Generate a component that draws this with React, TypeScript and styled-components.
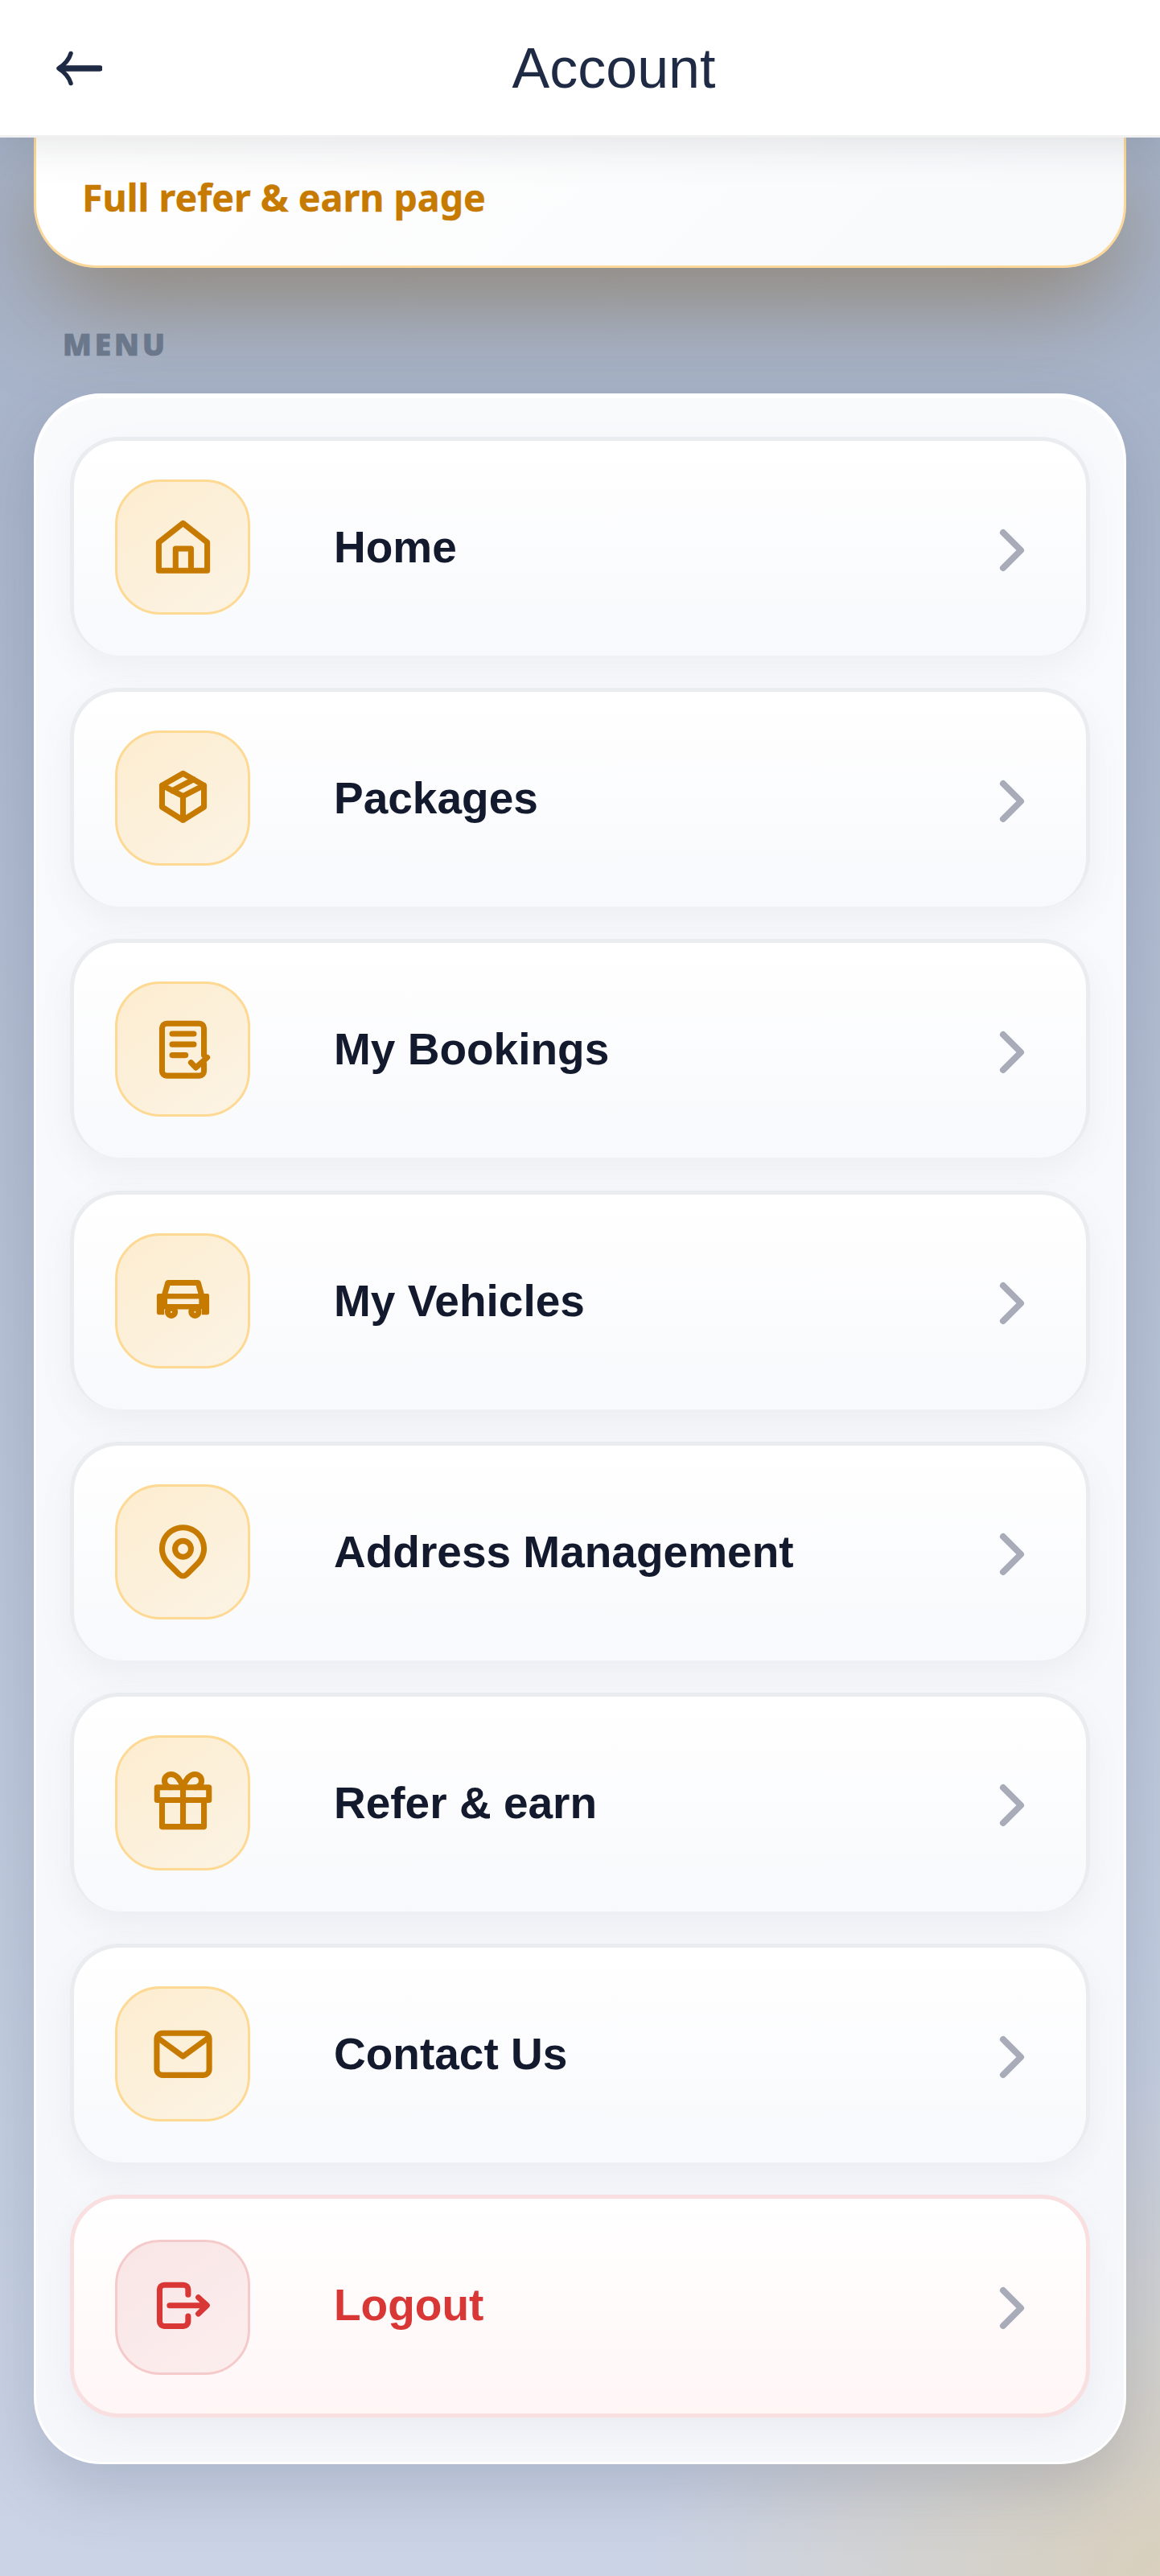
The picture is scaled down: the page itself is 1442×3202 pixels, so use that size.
import type { ReactNode } from "react";
import styled, { createGlobalStyle } from "styled-components";

const AMBER = "#c77a00";
const RED = "#d93636";

const GlobalStyle = createGlobalStyle`
  html, body {
    margin: 0;
    padding: 0;
    background: #b5c0d3;
  }
  * {
    box-sizing: border-box;
  }
`;

function Glyph({ children }: { children: ReactNode }) {
  return (
    <GlyphSvg viewBox="0 0 24 24" fill="none">
      {children}
    </GlyphSvg>
  );
}

const menuItems: { label: string; danger?: boolean; icon: ReactNode }[] = [
  {
    label: "Home",
    icon: (
      <Glyph>
        <path d="M3.5 10.2 12 3.5l8.5 6.7v9.9h-17zM9.4 20.1v-7.7h5.4v7.7" />
      </Glyph>
    ),
  },
  {
    label: "Packages",
    icon: (
      <Glyph>
        <path d="M12 3.2l7.35 4.2V15L12 19.6 4.65 15V7.4zM4.65 7.4 12 11.2l7.35-3.8M12 11.2v8.4M8.2 9.3l7.5-4" />
      </Glyph>
    ),
  },
  {
    label: "My Bookings",
    icon: (
      <Glyph>
        <path d="M19.35 14V4.5a1.6 1.6 0 0 0-1.6-1.6H6.25a1.6 1.6 0 0 0-1.6 1.6v15.1a1.6 1.6 0 0 0 1.6 1.6h11.5a1.6 1.6 0 0 0 1.6-1.6V17" />
        <path d="M8.2 6.5h7.6M8.2 10.2h7.6M8.2 14h4.7M14.8 16.6l1.7 1.8 4-3.6" />
      </Glyph>
    ),
  },
  {
    label: "My Vehicles",
    icon: (
      <Glyph>
        <path
          fill={AMBER}
          stroke="none"
          fillRule="evenodd"
          d="M3.4 9.6h17.2q.6 0 .6.6v6.2q0 .6-.6.6h-2V15.1H5.4V17h-2q-.6 0-.6-.6v-6.2q0-.6.6-.6zM6.5 11.4v1.9h11.1v-1.9z"
        />
        <path d="M5.6 9.7 6.7 5.8h10.6l1.1 3.9" />
        <circle cx="7.9" cy="16.05" r="1.3" />
        <circle cx="16.2" cy="16.05" r="1.3" />
      </Glyph>
    ),
  },
  {
    label: "Address Management",
    icon: (
      <Glyph>
        <path d="M12 3.6a7.35 7.35 0 0 1 5.2 12.55L13.4 20a2 2 0 0 1-2.8 0l-3.8-3.85A7.35 7.35 0 0 1 12 3.6z" />
        <circle cx="12" cy="11.1" r="2.8" />
      </Glyph>
    ),
  },
  {
    label: "Refer & earn",
    icon: (
      <Glyph>
        <path d="M2.9 6.7h18.2v4.45H2.9zM4.65 11.15v9.35h14.7v-9.35M12 6.7v13.8" />
        <path d="M12 6.7C11.2 4.3 9.8 2.1 7.8 2.1a2.3 2.3 0 0 0 0 4.6M12 6.7c.8-2.4 2.2-4.6 4.2-4.6a2.3 2.3 0 0 1 0 4.6" />
      </Glyph>
    ),
  },
  {
    label: "Contact Us",
    icon: (
      <Glyph>
        <rect x="2.8" y="4.6" width="18.4" height="14.7" rx="2" />
        <path d="M3.5 6.5 12 12.75l8.5-6.25" />
      </Glyph>
    ),
  },
  {
    label: "Logout",
    danger: true,
    icon: (
      <Glyph>
        <path d="M13.8 7.4V5.6A1.6 1.6 0 0 0 12.2 4H5.4a1.6 1.6 0 0 0-1.6 1.6v11.3a1.6 1.6 0 0 0 1.6 1.6h6.8a1.6 1.6 0 0 0 1.6-1.6V15" />
        <path d="M7.3 11.2h13M17.4 8.4l3 2.8-3 2.9" />
      </Glyph>
    ),
  },
];

export default function App() {
  return (
    <Page>
      <GlobalStyle />
      <Header>
        <BackButton aria-label="Back">
          <svg width="58" height="44" viewBox="0 0 58 44" fill="none">
            <path d="M55 22H6" stroke="#1f2a44" strokeWidth="7.5" strokeLinecap="round" />
            <path
              d="M19 3.5Q16 14 4 22q12 8 15 18.5"
              stroke="#1f2a44"
              strokeWidth="5.5"
              strokeLinecap="round"
              strokeLinejoin="round"
            />
          </svg>
        </BackButton>
        <Title>Account</Title>
      </Header>

      <Content>
        <ReferCard>
          <ReferLink>Full refer &amp; earn page</ReferLink>
        </ReferCard>

        <SectionLabel>MENU</SectionLabel>

        <MenuCard>
          {menuItems.map((item) => (
            <MenuRow key={item.label} $danger={item.danger}>
              <IconBox $danger={item.danger}>{item.icon}</IconBox>
              <RowLabel $danger={item.danger}>{item.label}</RowLabel>
              <Chevron viewBox="0 0 24 24" fill="none">
                <path d="M9 18l6-6-6-6" />
              </Chevron>
            </MenuRow>
          ))}
        </MenuCard>
      </Content>
    </Page>
  );
}

const Page = styled.div`
  width: 1442px;
  height: 3202px;
  overflow: hidden;
  display: flex;
  flex-direction: column;
  background:
    radial-gradient(circle 640px at 100% 100%, #d9d0bd 0%, rgba(217, 208, 189, 0) 100%),
    linear-gradient(180deg, #a2afc5 0%, #b4bfd3 45%, #cbd4e6 100%);
`;

const Header = styled.header`
  position: relative;
  z-index: 2;
  flex: none;
  height: 171px;
  padding: 1px 43px 0 69px;
  display: flex;
  align-items: center;
  background: #fff;
  border-bottom: 3px solid #f0f0f1;
  box-shadow: 0 6px 50px rgba(30, 35, 50, 0.13);
`;

const BackButton = styled.button`
  flex: none;
  width: 58px;
  height: 44px;
  padding: 0;
  border: 0;
  background: none;
  display: flex;
`;

const Title = styled.h1`
  flex: 1;
  margin: 0;
  text-align: center;
  font-family: "Liberation Sans", Arial, sans-serif;
  font-size: 70px;
  font-weight: 400;
  color: #1f2a44;
`;

const Content = styled.main`
  padding: 0 42px;
  display: flex;
  flex-direction: column;
`;

const ReferCard = styled.section`
  height: 162px;
  padding: 0 0 0 57px;
  display: flex;
  align-items: flex-end;
  border: 3px solid #fbd89a;
  border-top: 0;
  border-radius: 0 0 78px 78px;
  background: linear-gradient(135deg, #ffffff 0%, #f8f9fb 100%);
  box-shadow: 0 50px 120px -10px rgba(125, 95, 50, 0.55);
`;

const ReferLink = styled.span`
  margin-bottom: 55px;
  font-family: "Noto Sans", sans-serif;
  font-size: 46.5px;
  line-height: 60px;
  font-weight: 700;
  -webkit-text-stroke: 0.4px ${AMBER};
  color: ${AMBER};
`;

const SectionLabel = styled.h2`
  margin: 70px 0 36px 36px;
  font-family: "Noto Sans", sans-serif;
  font-size: 37px;
  line-height: 50px;
  font-weight: 900;
  letter-spacing: 4px;
  -webkit-text-stroke: 0.7px #6b788c;
  color: #6b788c;
`;

const MenuCard = styled.section`
  padding: 51px 42px 55px;
  display: flex;
  flex-direction: column;
  gap: 35.2px;
  border: 3px solid #fff;
  border-radius: 84px;
  background: linear-gradient(180deg, #f8fafc 0%, #f5f7fb 100%);
  box-shadow:
    inset 0 3px 0 #fff,
    0 30px 80px rgba(60, 70, 100, 0.2);
`;

/* plain rows have no bottom border, so the side borders taper off at the corners */
const MenuRow = styled.button<{ $danger?: boolean }>`
  height: ${(p) => (p.$danger ? "277px" : "272px")};
  margin-bottom: ${(p) => (p.$danger ? "0" : "5px")};
  padding: 0 48px 0 51px;
  display: flex;
  align-items: center;
  text-align: left;
  border: 5px solid ${(p) => (p.$danger ? "#f9dfdf" : "#eaecf0")};
  border-bottom-width: ${(p) => (p.$danger ? "5px" : "0")};
  border-radius: 61px;
  background: ${(p) =>
    p.$danger
      ? "linear-gradient(180deg, #ffffff 0%, #fff6f6 100%)"
      : "linear-gradient(180deg, #ffffff 0%, #f8f9fc 100%)"};
  background-clip: padding-box;
  box-shadow: 0 16px 40px rgba(110, 120, 140, 0.08);
`;

const IconBox = styled.span<{ $danger?: boolean }>`
  flex: none;
  width: 168px;
  height: 168px;
  margin-top: ${(p) => (p.$danger ? "3px" : "-3px")};
  display: flex;
  align-items: center;
  justify-content: center;
  border: 3px solid ${(p) => (p.$danger ? "#f5caca" : "#fdd993")};
  border-radius: 56px;
  background: ${(p) =>
    p.$danger
      ? "linear-gradient(145deg, #f9e5e6 0%, #fceeee 100%)"
      : "linear-gradient(145deg, #fdedd0 0%, #fbf3e4 100%)"};
  color: ${(p) => (p.$danger ? RED : AMBER)};
`;

const GlyphSvg = styled.svg`
  width: 85px;
  height: 85px;
  stroke: currentColor;
  stroke-width: 2;
  stroke-linecap: round;
  stroke-linejoin: round;
`;

const RowLabel = styled.span<{ $danger?: boolean }>`
  flex: 1;
  margin: 0 0 3px 104px;
  font-family: "Liberation Sans", Arial, sans-serif;
  font-size: 55px;
  font-weight: 700;
  color: ${(p) => (p.$danger ? RED : "#141a2e")};
`;

const Chevron = styled.svg`
  flex: none;
  width: 88px;
  height: 88px;
  margin-top: 4px;
  stroke: #a8abb8;
  stroke-width: 2.2;
  stroke-linecap: round;
  stroke-linejoin: round;
`;
